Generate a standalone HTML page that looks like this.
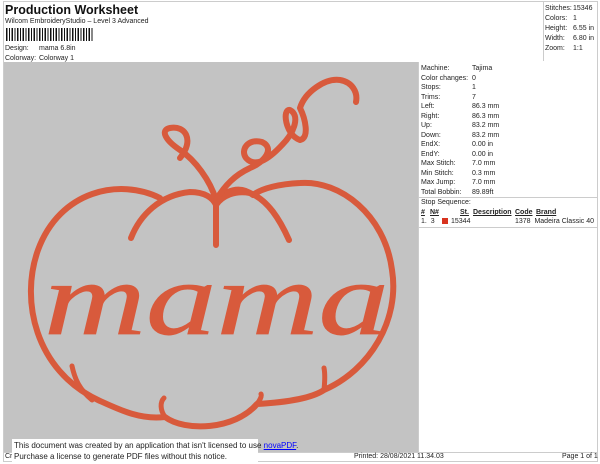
<!DOCTYPE html>
<html><head><meta charset="utf-8"><style>
*{margin:0;padding:0;box-sizing:border-box}
body{width:600px;height:464px;background:#fff;font-family:"Liberation Sans",Arial,sans-serif;color:#222;position:relative;overflow:hidden;font-size:7px}
.a{position:absolute;white-space:nowrap}
</style></head><body>
<div class="a" style="left:3px;top:1px;width:595px;height:461px;border:1px solid #ccc"></div>
<div class="a" style="left:5px;top:3px;font-size:12.5px;font-weight:bold;color:#111">Production Worksheet</div>
<div class="a" style="left:5px;top:18px;font-size:7px">Wilcom EmbroideryStudio – Level 3 Advanced</div>
<div class="a" style="left:6px;top:28px;width:88px;height:13px;background:repeating-linear-gradient(90deg,#111 0 1.5px,#fff 1.5px 3px,#111 3px 4px,#fff 4px 5.5px)"></div>
<div class="a" style="left:5px;top:45px">Design:</div><div class="a" style="left:39px;top:45px">mama 6.8in</div>
<div class="a" style="left:5px;top:55px">Colorway:</div><div class="a" style="left:39px;top:55px">Colorway 1</div>
<div class="a" style="left:543px;top:1px;width:1px;height:60px;background:#ccc"></div>
<div class="a" style="left:545px;top:4px;line-height:10px">Stitches:<br>Colors:<br>Height:<br>Width:<br>Zoom:</div>
<div class="a" style="left:573px;top:4px;line-height:10px">15346<br>1<br>6.55 in<br>6.80 in<br>1:1</div>
<div class="a" style="left:4px;top:62px;width:414px;height:390px;background:#c3c3c3"></div>
<div class="a" style="left:418px;top:62px;width:1px;height:390px;background:#ccc"></div>
<div class="a" style="left:421px;top:64px;line-height:9.5px">Machine:<br>Color changes:<br>Stops:<br>Trims:<br>Left:<br>Right:<br>Up:<br>Down:<br>EndX:<br>EndY:<br>Max Stitch:<br>Min Stitch:<br>Max Jump:<br>Total Bobbin:</div>
<div class="a" style="left:472px;top:64px;line-height:9.5px">Tajima<br>0<br>1<br>7<br>86.3 mm<br>86.3 mm<br>83.2 mm<br>83.2 mm<br>0.00 in<br>0.00 in<br>7.0 mm<br>0.3 mm<br>7.0 mm<br>89.89ft</div>
<div class="a" style="left:419px;top:197px;width:179px;height:1px;background:#ccc"></div>
<div class="a" style="left:421px;top:199px">Stop Sequence:</div>
<div class="a" style="left:421px;top:209px;font-weight:bold;text-decoration:underline">#</div>
<div class="a" style="left:430px;top:209px;font-weight:bold;text-decoration:underline">N#</div>
<div class="a" style="left:460px;top:209px;font-weight:bold;text-decoration:underline">St.</div>
<div class="a" style="left:473px;top:209px;font-weight:bold;text-decoration:underline">Description</div>
<div class="a" style="left:515px;top:209px;font-weight:bold;text-decoration:underline">Code</div>
<div class="a" style="left:536px;top:209px;font-weight:bold;text-decoration:underline">Brand</div>
<div class="a" style="left:421px;top:218px">1.&nbsp; 3</div>
<div class="a" style="left:442px;top:218px;width:6px;height:6px;background:#d8331f"></div>
<div class="a" style="left:451px;top:218px">15344</div>
<div class="a" style="left:515px;top:218px">1378&nbsp; Madeira Classic 40</div>
<div class="a" style="left:419px;top:227px;width:179px;height:1px;background:#ccc"></div>
<svg class="a" style="left:0;top:0" width="600" height="464" viewBox="0 0 600 464">
<g fill="none" stroke="#d85a3c" stroke-width="6" stroke-linecap="round" stroke-linejoin="round">
<path d="M160 198 C120 178 60 190 38 250 C20 300 35 370 98 400 C120 410 140 420 165 417 C185 432 235 430 257 404 C290 402 312 398 324 390 C370 370 400 320 392 270 C385 215 340 180 300 183 C280 184 262 188 253 195 C240 185 225 190 216 202"/>
<path d="M131 238 C140 215 160 195 190 192 C205 192 213 198 216 205"/>
<path d="M289 240 C280 220 268 200 250 193 C235 190 222 196 216 205"/>
<path d="M216 245 L216 200 C210 180 195 160 180 150 C165 140 160 130 170 128 C185 125 195 140 180 158"/>
<path d="M216 200 C225 185 235 175 250 168 C265 162 275 148 262 142 C248 138 240 150 246 158 C255 168 268 160 282 145 C295 132 300 115 290 110 C282 108 285 135 300 140 C310 138 305 118 300 108 C305 92 325 78 340 80 C352 82 358 92 356 102"/>
<path d="M92 400 C80 390 75 380 72 366" stroke-width="5"/>
<path d="M165 417 C160 410 160 402 164 398" stroke-width="5"/>
<path d="M257 404 C260 400 262 396 261 394" stroke-width="5"/>
<path d="M324 390 C325 380 325 373 324 368" stroke-width="5"/>
</g>
<text x="44" y="334" font-family="Liberation Serif, serif" font-size="104" fill="#d85a3c" stroke="#d85a3c" stroke-width="0.8" textLength="345" lengthAdjust="spacingAndGlyphs" font-style="italic">mama</text>
</svg>
<div class="a" style="left:3px;top:452px;width:595px;height:1px;background:#ccc"></div>
<div class="a" style="left:5px;top:453px">Cr</div>
<div class="a" style="left:354px;top:453px">Printed: 28/08/2021 11.34.03</div>
<div class="a" style="left:562px;top:453px">Page 1 of 1</div>
<div class="a" style="left:12px;top:439px;width:246px;height:24px;background:#fff;font-size:8px;line-height:11px;padding:1px 2px">This document was created by an application that isn't licensed to use <span style="color:#00f;text-decoration:underline">novaPDF</span>.<br>Purchase a license to generate PDF files without this notice.</div>
</body></html>
